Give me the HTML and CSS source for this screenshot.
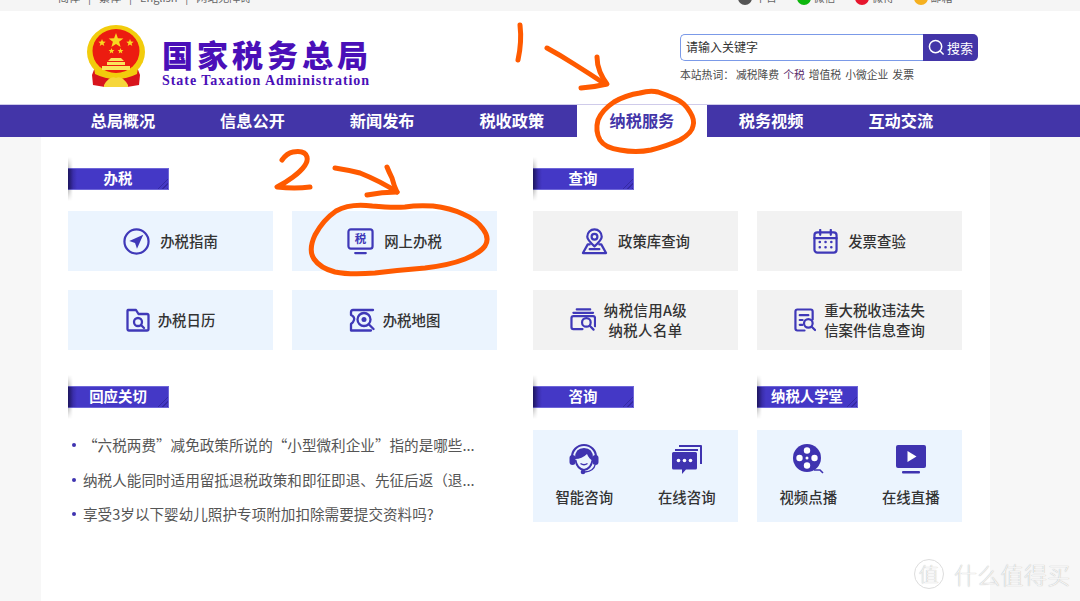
FILE: index.html
```html
<!DOCTYPE html>
<html lang="zh-CN">
<head>
  <meta charset="UTF-8">
  <title>国家税务总局 - 纳税服务</title>
  <link rel="stylesheet" href="styles.css">
</head>
<body>
  <div class="page">
    <!-- Top bar, cut off by the screenshot -->
    <div class="topbar">
      <div class="top-links">
        <span>简体</span><i>|</i><span>繁体</span><i>|</i><span>English</span><i>|</i><span>网站无障碍</span>
      </div>
      <div class="top-social">
        <span class="social"><b class="dot dot-grey"></b>平台</span>
        <span class="social"><b class="dot dot-green"></b>微信</span>
        <span class="social"><b class="dot dot-red"></b>微博</span>
        <span class="social"><b class="dot dot-orange"></b>邮箱</span>
      </div>
    </div>

    <!-- Header -->
    <header class="header">
      <div class="brand">
        <svg class="emblem" viewBox="0 0 58 63" width="58" height="63">
          <path d="M8 42 L5 50 L6 60 L18 62 L40 62 L52 60 L53 50 L50 42 Z" fill="#d8141c"/>
          <ellipse cx="29" cy="27" rx="29" ry="27" fill="#f2cc0c"/>
          <ellipse cx="29" cy="26" rx="23.500" ry="22" fill="#ec1c10"/>
          <path d="M29 8 l1.900 5.200 5.500 .2 -4.300 3.400 1.500 5.300 -4.600 -3.100 -4.600 3.100 1.500 -5.300 -4.300 -3.400 5.500 -.2 z" fill="#f8d820"/>
          <path d="M15 14 l1 2.600 2.700 .1 -2.100 1.700 .7 2.600 -2.300 -1.500 -2.300 1.500 .7 -2.600 -2.100 -1.700 2.700 -.1 z" fill="#f8d820"/>
          <path d="M43 14 l1 2.600 2.700 .1 -2.100 1.700 .7 2.600 -2.300 -1.500 -2.300 1.500 .7 -2.600 -2.100 -1.700 2.700 -.1 z" fill="#f8d820"/>
          <path d="M24.500 23 l.8 2 2.100 .1 -1.600 1.300 .5 2 -1.800 -1.100 -1.800 1.100 .5 -2 -1.600 -1.300 2.100 -.1 z" fill="#f8d820"/>
          <path d="M33.500 23 l.8 2 2.100 .1 -1.600 1.300 .5 2 -1.800 -1.100 -1.800 1.100 .5 -2 -1.600 -1.300 2.100 -.1 z" fill="#f8d820"/>
          <path d="M24 33 h10 l3 3 h-16 z M20 37 h18 v3 h-18 z M15 41 h28 v4 h-28 z" fill="#fbe45a"/>
          <path d="M6 36 Q12 49 29 50 Q46 49 52 36 L50 49 Q40 54 29 54 Q18 54 8 49 Z" fill="#f2cc0c"/>
          <path d="M17 60 Q23 50 29 53 Q35 50 41 60 L41 62 H17 Z" fill="#f6d63a"/>
        </svg>
        <div class="brand-text">
          <div class="brand-cn">国家税务总局</div>
          <div class="brand-en">State Taxation Administration</div>
        </div>
      </div>
      <div class="search-area">
        <div class="search">
          <div class="search-input">请输入关键字</div>
          <div class="search-btn">
            <svg viewBox="0 0 18 18" width="17" height="17"><circle cx="8" cy="8" r="6.500" fill="none" stroke="#fff" stroke-width="1.600"/><path d="M12.800 12.800 L16.500 16.500" stroke="#fff" stroke-width="1.600"/></svg>
            <span>搜索</span>
          </div>
        </div>
        <div class="hotwords">
          <span>本站热词：</span><a>减税降费</a><a class="visited">个税</a><a>增值税</a><a>小微企业</a><a>发票</a>
        </div>
      </div>
    </header>

    <nav class="nav">
      <a>总局概况</a>
      <a>信息公开</a>
      <a>新闻发布</a>
      <a>税收政策</a>
      <a class="active">纳税服务</a>
      <a>税务视频</a>
      <a>互动交流</a>
    </nav>

    <main class="main">
      <section>
        <h2 class="sec-head">办税</h2>
        <div class="tiles">
          <a class="tile">
            <svg class="ico" viewBox="0 0 28 28" width="27" height="27"><circle cx="14" cy="14" r="12.500"/><path class="fill" d="M21 7 L6.500 13.500 L12.500 15.500 L14.500 21.500 Z"/></svg>
            <span>办税指南</span>
          </a>
          <a class="tile">
            <svg class="ico" viewBox="0 0 28 28" width="27" height="27"><rect x="1.500" y="1.500" width="25" height="20" rx="2.500"/><path d="M8.500 26 H19.500"/><text x="14" y="16" class="ico-text">税</text></svg>
            <span>网上办税</span>
          </a>
          <a class="tile tile-tight">
            <svg class="ico" viewBox="0 0 24 24" width="24" height="24"><path d="M2 2 H10 L12.500 6 H21 Q22.500 6 22.500 7.500 V21 Q22.500 22.500 21 22.500 H3 Q1.500 22.500 1.500 21 V3 Q1.500 2 2 2 Z"/><circle cx="12" cy="14" r="4"/><path d="M15 17 L18 20"/></svg>
            <span>办税日历</span>
          </a>
          <a class="tile tile-tight">
            <svg class="ico" viewBox="0 0 26 24" width="26" height="24"><path d="M24 2 H4 Q2 2 2 4 V7 Q6 9 5 12 Q4.500 14 2 16 V22.500 H22"/><circle cx="15" cy="11.500" r="6.500"/><circle class="fill" cx="15" cy="11.500" r="2.500"/><path d="M20 16.500 L24.500 21"/></svg>
            <span>办税地图</span>
          </a>
        </div>
      </section>

      <section>
        <h2 class="sec-head">查询</h2>
        <div class="tiles tiles-grey">
          <a class="tile">
            <svg class="ico" viewBox="0 0 28 28" width="27" height="27"><path d="M14 19 Q6.500 12 6.500 9 A7.500 7.500 0 0 1 21.500 9 Q21.500 12 14 19 Z"/><circle cx="14" cy="9" r="3"/><path d="M9 17 H7 L2 26 H26 L21 17 H19 M9 22 H19"/></svg>
            <span>政策库查询</span>
          </a>
          <a class="tile">
            <svg class="ico" viewBox="0 0 26 26" width="25" height="25"><rect x="1.500" y="3.500" width="23" height="21" rx="3"/><path d="M1.500 9.500 H24.500 M7.500 1 V6 M18.500 1 V6"/><path class="dots" d="M7 13.500 h.1 M13 13.500 h.1 M19 13.500 h.1 M7 19 h.1 M13 19 h.1 M19 19 h.1"/></svg>
            <span>发票查验</span>
          </a>
          <a class="tile tile-tight tile-credit">
            <svg class="ico" viewBox="0 0 27 25" width="26" height="24"><path d="M7 1.500 H21 M3.500 5 H24"/><path d="M26 19 V10.500 Q26 8.500 24 8.500 H3.500 Q1.500 8.500 1.500 10.500 V20 Q1.500 22 3.500 22 H13"/><circle cx="17" cy="15" r="4.500"/><path d="M20.500 18.500 L24.500 22.500"/></svg>
            <div class="tile-lines"><span>纳税信用A级</span><span>纳税人名单</span></div>
          </a>
          <a class="tile tile-tight">
            <svg class="ico" viewBox="0 0 23 25" width="22" height="24"><path d="M11 23.500 H3.500 Q1.500 23.500 1.500 21.500 V3.500 Q1.500 1.500 3.500 1.500 H17.500 Q19.500 1.500 19.500 3.500 V12"/><path d="M6 7.500 H15 M6 12.500 H9 M6 17.500 H9"/><circle cx="15" cy="16" r="4.500"/><path d="M18.500 19.500 L22 23"/></svg>
            <div class="tile-lines"><span>重大税收违法失</span><span>信案件信息查询</span></div>
          </a>
        </div>
      </section>

      <section>
        <h2 class="sec-head">回应关切</h2>
        <ul class="news">
          <li>“六税两费”减免政策所说的“小型微利企业”指的是哪些...</li>
          <li>纳税人能同时适用留抵退税政策和即征即退、先征后返（退...</li>
          <li>享受3岁以下婴幼儿照护专项附加扣除需要提交资料吗?</li>
        </ul>
      </section>

      <section class="bottom-right">
        <div>
          <h2 class="sec-head">咨询</h2>
          <div class="panel">
            <a class="panel-item">
              <svg class="solid" viewBox="0 0 34 32" width="34" height="32">
                <path d="M5 14 A12 12 0 0 1 29 14" fill="none" stroke="#3f33b0" stroke-width="2.200"/>
                <path d="M8 15 Q8 5 17 5 Q26 5 26 15 L26 18 Q22 16 20 11 Q15 16 8 16 Z"/>
                <rect x="2.500" y="12" width="6" height="10" rx="3"/><rect x="25.500" y="12" width="6" height="10" rx="3"/>
                <path d="M8.500 17 Q10 26 17 27 Q24 26 25.500 17" fill="none" stroke="#3f33b0" stroke-width="1.800"/>
                <path d="M13.500 20.500 Q17 23 20.500 20.500" fill="none" stroke="#3f33b0" stroke-width="1.400"/>
                <path d="M28 22 Q27 28 18 29" fill="none" stroke="#3f33b0" stroke-width="1.400"/>
                <circle cx="16" cy="29" r="2.300"/>
              </svg>
              <span>智能咨询</span>
            </a>
            <a class="panel-item">
              <svg class="solid" viewBox="0 0 32 32" width="32" height="32">
                <path d="M8 2 H30 Q31 2 31 3 V21 H29 V4 H8 Z M4 6 H27 V8 H4 Z"/>
                <path d="M2.500 9 H24.500 Q26 9 26 10.500 V25 Q26 26.500 24.500 26.500 H15 L11 31 V26.500 H2.500 Q1 26.500 1 25 V10.500 Q1 9 2.500 9 Z"/>
                <circle cx="7.500" cy="17.500" r="1.800" fill="#fff"/><circle cx="13.500" cy="17.500" r="1.800" fill="#fff"/><circle cx="19.500" cy="17.500" r="1.800" fill="#fff"/>
              </svg>
              <span>在线咨询</span>
            </a>
          </div>
        </div>
        <div>
          <h2 class="sec-head">纳税人学堂</h2>
          <div class="panel">
            <a class="panel-item">
              <svg class="solid" viewBox="0 0 32 32" width="32" height="32">
                <circle cx="15" cy="15" r="14"/>
                <circle cx="15" cy="7.500" r="3.200" fill="#fff"/><circle cx="15" cy="22.500" r="3.200" fill="#fff"/><circle cx="7.500" cy="15" r="3.200" fill="#fff"/><circle cx="22.500" cy="15" r="3.200" fill="#fff"/><circle cx="15" cy="15" r="1.500" fill="#fff"/>
                <path d="M22 27 H28 L31 30" fill="none" stroke="#3f33b0" stroke-width="1.600"/>
              </svg>
              <span>视频点播</span>
            </a>
            <a class="panel-item">
              <svg class="solid" viewBox="0 0 32 32" width="32" height="32">
                <rect x="1" y="2" width="30" height="23" rx="2"/>
                <path d="M12.500 8 L21.500 13.500 L12.500 19 Z" fill="#fff"/>
                <rect x="7" y="28" width="18" height="2.500" rx="1"/>
              </svg>
              <span>在线直播</span>
            </a>
          </div>
        </div>
      </section>
    </main>

    <!-- Hand drawn marks on top of the screenshot -->
    <svg class="marks" viewBox="0 0 1080 601" width="1080" height="601">
      <path d="M520 25 Q522 42 518 60"/>
      <path d="M547 48 Q560 55 574 64 Q590 74 605 84"/>
      <path d="M597 57 Q597 65 600 72 Q603 79 607 84 Q595 87 581 88"/>
      <path d="M640 93 Q626 95 614 102 Q602 110 598 120 Q595 131 600 140 Q605 148 620 150 Q636 153 651 150 Q667 146 680 140 Q692 133 693 126 Q695 120 690 112 Q685 103 676 99 Q667 95 658 92 Q650 90 640 93"/>
      <path d="M282 160 Q287 153 293 152 Q305 150 307 157 Q309 165 293 177 Q285 183 277 187 Q295 189 310 187"/>
      <path d="M335 168 Q348 170 360 173 Q380 181 397 192"/>
      <path d="M387 167 Q389 172 392 178 Q394 186 397 192 Q382 192 367 195"/>
      <path d="M372 206 Q350 203 336 211 Q323 220 315 235 Q308 250 314 259 Q320 268 335 272 Q350 275 375 273 Q400 270 425 268 Q450 265 465 259 Q480 253 485 246 Q490 238 483 229 Q477 220 463 214 Q450 208 433 206 Q417 205 405 207 Q393 208 372 206"/>
    </svg>

    <div class="watermark"><span class="wm-logo">值</span><span>什么值得买</span></div>
  </div>
</body>
</html>
```

FILE: styles.css
```css
/* General page */
* {
  box-sizing: border-box;
}

body {
  margin: 0;
  font-family: "Noto Sans CJK SC", "Liberation Sans", sans-serif;
  color: #333;
  background-color: #f7f7f7;
}

a {
  color: inherit;
  text-decoration: none;
}

.page {
  position: relative;
  width: 1080px;
  height: 601px;
  overflow: hidden;
  display: flex;
  flex-direction: column;
}

/* Top bar */
.topbar {
  height: 11px;
  flex: none;
  overflow: hidden;
  display: flex;
  align-items: flex-end;
  justify-content: space-between;
  padding: 0 108px 7px 58px;
  background-color: #f5f5f5;
  font-size: 11px;
  line-height: 14px;
  color: #666;
}

.top-links {
  display: flex;
  gap: 8px;
}

.top-links i {
  font-style: normal;
}

.top-social {
  display: flex;
}

.social {
  display: flex;
  align-items: center;
  gap: 3px;
  width: 58.500px;
  white-space: nowrap;
}

.dot {
  width: 14px;
  height: 14px;
  flex: none;
  border-radius: 50%;
  position: relative;
  top: 1px;
}

.dot-grey { background-color: #555; }
.dot-green { background-color: #0db60d; }
.dot-red { background-color: #e6162d; }
.dot-orange { background-color: #f5b020; }

/* Header */
.header {
  height: 93px;
  flex: none;
  display: flex;
  justify-content: space-between;
  padding: 14px 102px 0 87px;
  background-color: #fff;
}

.brand {
  display: flex;
  gap: 17px;
  align-items: flex-start;
}

.brand-text {
  padding-top: 13px;
}

.brand-cn {
  font-size: 31px;
  line-height: 32px;
  font-weight: 900;
  letter-spacing: 4px;
  color: #4a0fb8;
  white-space: nowrap;
}

.brand-en {
  margin-top: 3px;
  font-family: "Liberation Serif", serif;
  font-size: 14px;
  line-height: 15px;
  font-weight: 700;
  letter-spacing: 0.950px;
  color: #4a0fb8;
  white-space: nowrap;
}

.search-area {
  width: 298px;
  padding-top: 9px;
}

.search {
  display: flex;
  height: 27px;
}

.search-input {
  flex: 1;
  border: 1px solid #7b9ae8;
  border-right: none;
  border-radius: 5px 0 0 5px;
  padding-left: 5px;
  font-size: 12px;
  line-height: 24px;
  color: #333;
}

.search-btn {
  width: 55px;
  display: flex;
  align-items: center;
  justify-content: center;
  gap: 2px;
  border-radius: 0 5px 5px 0;
  background-color: #4335a8;
  color: #fff;
  font-size: 13px;
}

.hotwords {
  display: flex;
  gap: 4px;
  margin-top: 5px;
  font-size: 10.800px;
  line-height: 16px;
  color: #4a4a4a;
  white-space: nowrap;
}

.hotwords span {
  margin-right: -2px;
}

.hotwords .visited {
  color: #5a2a6a;
}

/* Main navigation */
.nav {
  height: 33px;
  flex: none;
  display: flex;
  padding-left: 58px;
  background-color: #4335a8;
  border-top: 1px solid #cfcbea;
}

.nav a {
  width: 129.670px;
  text-align: center;
  font-size: 16.200px;
  line-height: 30px;
  font-weight: 700;
  color: #fff;
}

.nav a.active {
  width: 130px;
  margin: 0 -0.650px 0 0.300px;
  background-color: #fff;
  color: #4335a8;
}

/* Content */
.main {
  flex: 1;
  width: 949px;
  margin-left: 41px;
  padding: 31px 0 0 27px;
  background-color: #fff;
  display: grid;
  grid-template-columns: 429px 429px;
  grid-template-rows: 182px auto;
  column-gap: 36px;
  row-gap: 36px;
  align-content: start;
}

.sec-head {
  position: relative;
  width: 101px;
  height: 22px;
  margin: 0;
  background: linear-gradient(to right, #2c2088 0, #4438c6 9px);
  border: 1px solid #6e66d8;
  border-left: none;
  color: #fff;
  font-size: 14.400px;
  line-height: 18px;
  font-weight: 700;
  text-align: center;
}

/* soft shadow on the left edge of the section label */
.sec-head::before {
  content: "";
  position: absolute;
  left: 0;
  top: -12px;
  bottom: -12px;
  width: 5px;
  background: linear-gradient(to bottom, transparent, rgba(0, 0, 0, 0.3) 30%, rgba(0, 0, 0, 0.3) 70%, transparent);
  -webkit-mask-image: linear-gradient(to right, #000, transparent);
  mask-image: linear-gradient(to right, #000, transparent);
}

.sec-head::after {
  content: "";
  position: absolute;
  right: 0;
  bottom: 0;
  width: 13px;
  height: 13px;
  background: repeating-linear-gradient(135deg, transparent 0 2px, rgba(30, 20, 110, 0.4) 2px 3px);
  clip-path: polygon(100% 0, 100% 100%, 0 100%);
}

.tiles {
  display: grid;
  grid-template-columns: 205px 205px;
  grid-auto-rows: 60px;
  column-gap: 19px;
  row-gap: 19px;
  margin-top: 21px;
}

.tile {
  display: flex;
  align-items: center;
  justify-content: center;
  gap: 10px;
  background-color: #ebf4fe;
  font-size: 14.400px;
  font-weight: 500;
  line-height: 20px;
  color: #333;
}

.tiles-grey .tile {
  background-color: #f2f2f2;
}

.tile-tight {
  gap: 8px;
}

.tile-credit {
  padding-right: 14px;
  letter-spacing: 0.400px;
}

.tile-lines {
  display: flex;
  flex-direction: column;
  align-items: center;
}

.ico {
  flex: none;
  fill: none;
  stroke: #3f38b8;
  stroke-width: 2.300;
  stroke-linecap: round;
  stroke-linejoin: round;
}

.ico .fill {
  fill: #3f38b8;
  stroke: none;
}

.ico .dots {
  stroke-width: 2.600;
}

.ico-text {
  font-size: 12px;
  font-weight: 700;
  text-anchor: middle;
  fill: #3f38b8;
  stroke: none;
}

/* News list */
.news {
  list-style: none;
  margin: 20px 0 0;
  padding: 0 0 0 15px;
  font-size: 14.600px;
  line-height: 34.500px;
  color: #555;
}

.news li {
  position: relative;
  white-space: nowrap;
}

.news li::before {
  content: "";
  position: absolute;
  left: -11px;
  top: 15px;
  width: 4px;
  height: 4px;
  border-radius: 50%;
  background-color: #3f33b0;
}

/* Consult and classroom panels */
.bottom-right {
  display: grid;
  grid-template-columns: 205px 205px;
  column-gap: 19px;
}

.panel {
  height: 92px;
  margin-top: 22px;
  display: grid;
  grid-template-columns: 1fr 1fr;
  background-color: #ebf4fe;
}

.panel-item {
  display: flex;
  flex-direction: column;
  align-items: center;
  padding-top: 13px;
  font-size: 14.400px;
  font-weight: 500;
  color: #333;
}

.panel-item span {
  margin-top: 11px;
  line-height: 22px;
}

.solid {
  fill: #3f33b0;
}

/* Hand drawn orange marks */
.marks {
  position: absolute;
  left: 0;
  top: 0;
  fill: none;
  stroke: #ff5a00;
  stroke-width: 5;
  stroke-linecap: round;
  stroke-linejoin: round;
  pointer-events: none;
}

/* Watermark */
.watermark {
  position: absolute;
  left: 914px;
  top: 558px;
  display: flex;
  align-items: center;
  gap: 10px;
  font-size: 23px;
  line-height: 32px;
  letter-spacing: 0.300px;
  font-weight: 300;
  color: #f4f4f4;
  text-shadow: 0 0 1px #a8a8a8;
}

.wm-logo {
  width: 30px;
  height: 30px;
  border-radius: 50%;
  border: 1px solid #ddd;
  font-size: 20px;
  line-height: 27px;
  text-align: center;
}
```
